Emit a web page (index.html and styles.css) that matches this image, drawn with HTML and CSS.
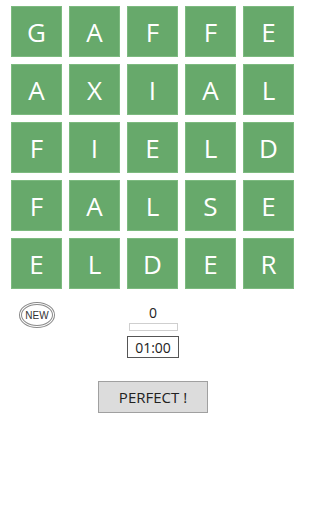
FILE: index.html
```html
<!DOCTYPE html>
<html>
<head>
<meta charset="utf-8">
<link rel="stylesheet" href="styles.css">
</head>
<body>
<div class="app">
<div class="board">
  <div class="tile">G</div><div class="tile">A</div><div class="tile">F</div><div class="tile">F</div><div class="tile">E</div>
  <div class="tile">A</div><div class="tile">X</div><div class="tile">I</div><div class="tile">A</div><div class="tile">L</div>
  <div class="tile">F</div><div class="tile">I</div><div class="tile">E</div><div class="tile">L</div><div class="tile">D</div>
  <div class="tile">F</div><div class="tile">A</div><div class="tile">L</div><div class="tile">S</div><div class="tile">E</div>
  <div class="tile">E</div><div class="tile">L</div><div class="tile">D</div><div class="tile">E</div><div class="tile">R</div>
</div>
<div class="controls">
  <div class="left"><div class="new">NEW</div></div>
  <div class="center">
    <div class="score">0</div>
    <div class="progress"></div>
    <div class="timer">01:00</div>
  </div>
  <div class="right"></div>
</div>
<div class="actions">
  <button class="perfect">PERFECT !</button>
</div>
</div>
</body>
</html>
```
FILE: styles.css
```css
html, body {
  margin: 0;
  padding: 0;
  background: #ffffff;
  font-family: "Open Sans", "Noto Sans", sans-serif;
  color: #222;
}
.app {
  width: 306px;
}
.board {
  display: grid;
  grid-template-columns: repeat(5, 51px);
  grid-auto-rows: 51px;
  gap: 7px;
  padding: 6px 0 0 11px;
}
.tile {
  box-sizing: border-box;
  background: #67a96b;
  border: 1px solid #7dba80;
  color: #ffffff;
  font-size: 26px;
  font-weight: 400;
  display: flex;
  align-items: center;
  justify-content: center;
  line-height: 1;
}
.controls {
  display: grid;
  grid-template-columns: 1fr auto 1fr;
  margin-top: 13px;
}
.left {
  padding-left: 19px;
}
.new {
  width: 36px;
  height: 26px;
  box-sizing: border-box;
  border: 3px double #8a8a8a;
  border-radius: 50%;
  font-size: 10px;
  color: #333;
  display: flex;
  align-items: center;
  justify-content: center;
  font-family: "Liberation Sans", sans-serif;
}
.center {
  display: flex;
  flex-direction: column;
  align-items: center;
  padding-top: 2px;
}
.score {
  font-size: 14px;
  line-height: 17px;
  color: #222;
}
.progress {
  width: 49px;
  height: 8px;
  box-sizing: border-box;
  border: 1px solid #cfcfcf;
  margin-top: 2px;
}
.timer {
  margin-top: 5px;
  width: 52px;
  height: 22px;
  box-sizing: border-box;
  border: 1.5px solid #555;
  font-size: 14px;
  color: #222;
  display: flex;
  align-items: center;
  justify-content: center;
}
.actions {
  display: flex;
  justify-content: center;
  margin-top: 23px;
}
.perfect {
  width: 110px;
  height: 32px;
  background: #dcdcdc;
  border: 1px solid #a0a0a0;
  font-family: "Open Sans", "Noto Sans", sans-serif;
  font-size: 15px;
  color: #222;
  padding: 0;
}
```
